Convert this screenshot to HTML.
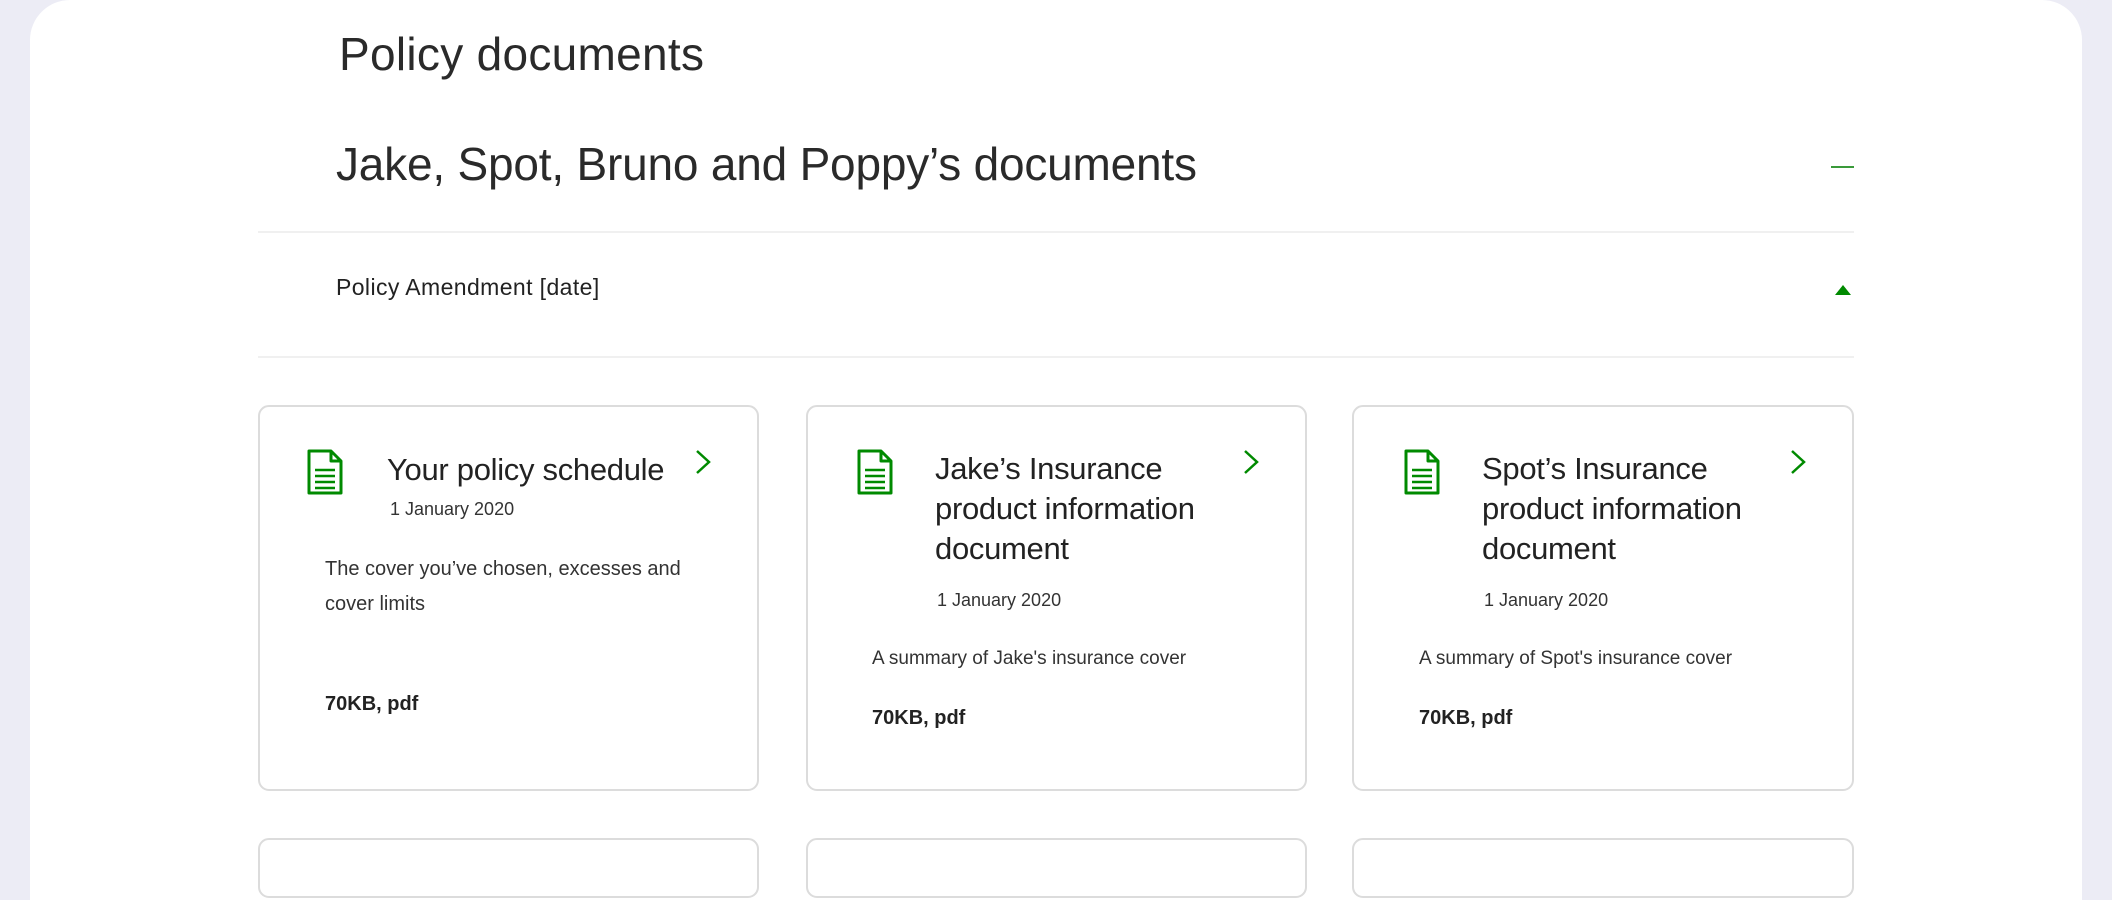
<!DOCTYPE html>
<html><head><meta charset="utf-8"><style>
*{margin:0;padding:0;box-sizing:border-box}
body{width:2112px;height:852px;overflow:hidden;background:#ececf5;font-family:"Liberation Sans",sans-serif;color:#222;position:relative}
.panel{position:absolute;left:30px;top:0;width:2052px;height:900px;background:#fff;border-top-left-radius:40px;border-top-right-radius:40px}
.a{position:absolute;white-space:nowrap}
.hr{position:absolute;left:258px;width:1596px;height:2px;background:#f0f0f0}
.card{position:absolute;top:405px;height:386px;border:2px solid #dcdcdc;border-radius:11px;background:#fff}
.card2{position:absolute;top:838px;height:60px;border:2px solid #dcdcdc;border-radius:11px;background:#fff}
.t{font-size:31px;line-height:40px;color:#222;letter-spacing:-0.3px}
.d{font-size:18px;line-height:1;color:#333}
.s{font-size:20px;line-height:35px;color:#333}
.k{font-size:20px;line-height:1;font-weight:bold;color:#222}
</style></head><body>
<div class="panel"></div>
<div class="a" style="left:339px;top:31px;font-size:46px;line-height:1;letter-spacing:0.3px;color:#2a2a2a">Policy documents</div>
<div class="a" style="left:336px;top:141px;font-size:46px;line-height:1;letter-spacing:-0.2px;color:#2a2a2a">Jake, Spot, Bruno and Poppy’s documents</div>
<div class="a" style="left:1831px;top:166px;width:23px;height:2px;background:#3a9a3a"></div>
<div class="hr" style="top:231px"></div>
<div class="a" style="left:336px;top:276px;font-size:23px;line-height:1;letter-spacing:0.4px">Policy Amendment [date]</div>
<svg class="a" style="left:1834px;top:284px" width="18" height="12"><polygon points="9,1 17,11 1,11" fill="#008a00"/></svg>
<div class="hr" style="top:356px"></div>

<div class="card" style="left:258px;width:501px"></div>
<div class="card" style="left:806px;width:501px"></div>
<div class="card" style="left:1352px;width:502px"></div>
<div class="card2" style="left:258px;width:501px"></div>
<div class="card2" style="left:806px;width:501px"></div>
<div class="card2" style="left:1352px;width:502px"></div>

<svg class="a" style="left:307px;top:449px" width="36" height="46" viewBox="0 0 36 46"><path d="M2 2h22l10 10v32H2z M24 2v10h10" fill="none" stroke="#008a00" stroke-width="3" stroke-linejoin="round"/><path d="M8 21h20M8 27h20M8 33h20M8 39h20" stroke="#008a00" stroke-width="2.5"/></svg>
<svg class="a" style="left:857px;top:449px" width="36" height="46" viewBox="0 0 36 46"><path d="M2 2h22l10 10v32H2z M24 2v10h10" fill="none" stroke="#008a00" stroke-width="3" stroke-linejoin="round"/><path d="M8 21h20M8 27h20M8 33h20M8 39h20" stroke="#008a00" stroke-width="2.5"/></svg>
<svg class="a" style="left:1404px;top:449px" width="36" height="46" viewBox="0 0 36 46"><path d="M2 2h22l10 10v32H2z M24 2v10h10" fill="none" stroke="#008a00" stroke-width="3" stroke-linejoin="round"/><path d="M8 21h20M8 27h20M8 33h20M8 39h20" stroke="#008a00" stroke-width="2.5"/></svg>
<svg class="a" style="left:694px;top:449px" width="18" height="26"><path d="M3 2l12 11L3 24" fill="none" stroke="#008a00" stroke-width="2.5"/></svg>
<svg class="a" style="left:1242px;top:449px" width="18" height="26"><path d="M3 2l12 11L3 24" fill="none" stroke="#008a00" stroke-width="2.5"/></svg>
<svg class="a" style="left:1789px;top:449px" width="18" height="26"><path d="M3 2l12 11L3 24" fill="none" stroke="#008a00" stroke-width="2.5"/></svg>

<div class="a t" style="left:387px;top:450px">Your policy schedule</div>
<div class="a d" style="left:390px;top:500px">1 January 2020</div>
<div class="a s" style="left:325px;top:552px">The cover you’ve chosen, excesses and<br>cover limits</div>
<div class="a k" style="left:325px;top:694px">70KB, pdf</div>

<div class="a t" style="left:935px;top:449px">Jake’s Insurance<br>product information<br>document</div>
<div class="a d" style="left:937px;top:591px">1 January 2020</div>
<div class="a s" style="left:872px;top:641px;font-size:19px">A summary of Jake's insurance cover</div>
<div class="a k" style="left:872px;top:708px">70KB, pdf</div>

<div class="a t" style="left:1482px;top:449px">Spot’s Insurance<br>product information<br>document</div>
<div class="a d" style="left:1484px;top:591px">1 January 2020</div>
<div class="a s" style="left:1419px;top:641px;font-size:19px">A summary of Spot's insurance cover</div>
<div class="a k" style="left:1419px;top:708px">70KB, pdf</div>
</body></html>
